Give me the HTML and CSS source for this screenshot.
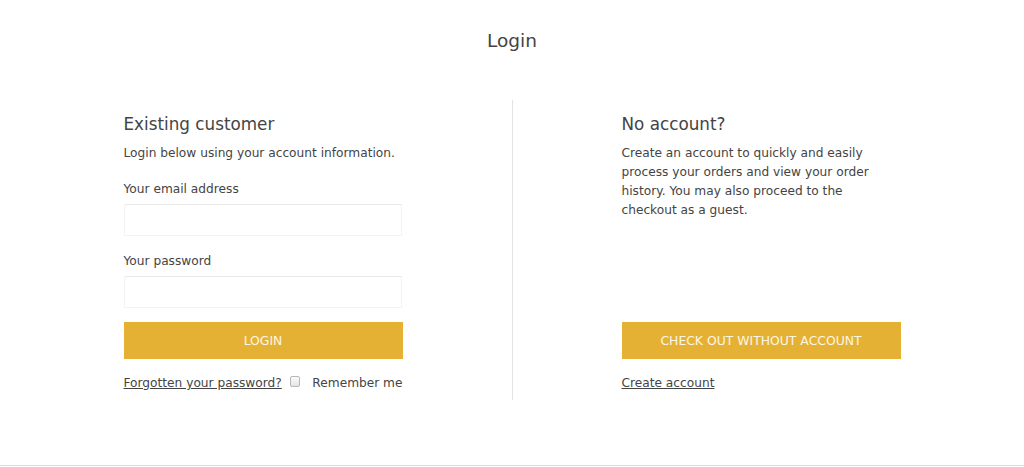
FILE: index.html
```html
<!DOCTYPE html>
<html lang="en">
<head>
<meta charset="utf-8">
<title>Login</title>
<link rel="stylesheet" href="styles.css">
</head>
<body>
<div class="page">
  <h1 class="page-title">Login</h1>
  <main class="columns">
    <section class="col col-login">
      <h2 class="col-title">Existing customer</h2>
      <p class="col-text">Login below using your account information.</p>
      <label class="field-label" for="email">Your email address</label>
      <input class="field-input" id="email" type="email">
      <label class="field-label field-label-2" for="pass">Your password</label>
      <input class="field-input" id="pass" type="password">
      <button class="btn" type="button">LOGIN</button>
      <div class="login-links">
        <a class="link" href="#">Forgotten your password?</a>
        <input class="remember-box" type="checkbox" id="remember">
        <label class="remember-label" for="remember">Remember me</label>
      </div>
    </section>
    <div class="divider"></div>
    <section class="col col-guest">
      <h2 class="col-title">No account?</h2>
      <p class="col-text col-text-guest">Create an account to quickly and easily process your orders and view your order history. You may also proceed to the checkout as a guest.</p>
      <button class="btn btn-guest" type="button">CHECK OUT WITHOUT ACCOUNT</button>
      <div class="guest-links">
        <a class="link" href="#">Create account</a>
      </div>
    </section>
  </main>
  <footer class="footer"></footer>
</div>
</body>
</html>
```
FILE: styles.css
```css
html, body {
  margin: 0;
  padding: 0;
  background: #fff;
}
body {
  font-family: "DejaVu Sans", Verdana, sans-serif;
  color: #444;
  font-size: 12.2px;
}
.page {
  height: 467px;
  overflow: hidden;
}
.page-title {
  margin: 0;
  padding-top: 29px;
  font-size: 18.5px;
  line-height: 24px;
  font-weight: normal;
  text-align: center;
  color: #444;
}
.columns {
  margin-top: 47px;
  display: grid;
  grid-template-columns: 279px 1px 279px;
  column-gap: 109px;
  justify-content: center;
}
.divider {
  background: #e3e3e3;
}
.col {
  display: flex;
  flex-direction: column;
  padding-top: 13px;
  padding-bottom: 7px;
}
.col-title {
  margin: 0;
  font-size: 16.8px;
  line-height: 22px;
  font-weight: normal;
  color: #444;
}
.col-text {
  margin: 9px 0 0;
  line-height: 19px;
}
.col-text-guest {
  max-width: 265px;
}
.field-label {
  margin-top: 17px;
  line-height: 19px;
  display: block;
}
.field-label-2 {
  margin-top: 16px;
}
.field-input {
  margin-top: 5px;
  box-sizing: border-box;
  width: 278px;
  height: 32px;
  border: 1px solid #f3f3f3;
  border-top-color: #e9e9e9;
  background: #fff;
  padding: 0 8px;
  font: inherit;
  outline: none;
}
.btn {
  margin-top: 14px;
  height: 37px;
  width: 100%;
  border: 0;
  background: #e5b134;
  color: #fdf6e3;
  font-family: inherit;
  font-size: 12.4px;
  cursor: pointer;
}
.btn-guest {
  margin-top: auto;
}
.login-links, .guest-links {
  margin-top: 15px;
  line-height: 19px;
  display: flex;
  align-items: center;
  white-space: nowrap;
}
.link {
  color: #444;
  text-decoration: underline;
}
.remember-box {
  -webkit-appearance: none;
  appearance: none;
  box-sizing: border-box;
  margin: 0 0 0 8px;
  width: 11px;
  height: 11px;
  border: 1px solid #b8b8b8;
  border-radius: 2px;
  background: linear-gradient(#fcfcfc, #e4e4e4);
  position: relative;
  top: -2px;
}
.remember-label {
  margin-left: 12px;
}
.footer {
  margin-top: 65px;
  border-top: 1px solid #dcdcdc;
  height: 1px;
}
```
